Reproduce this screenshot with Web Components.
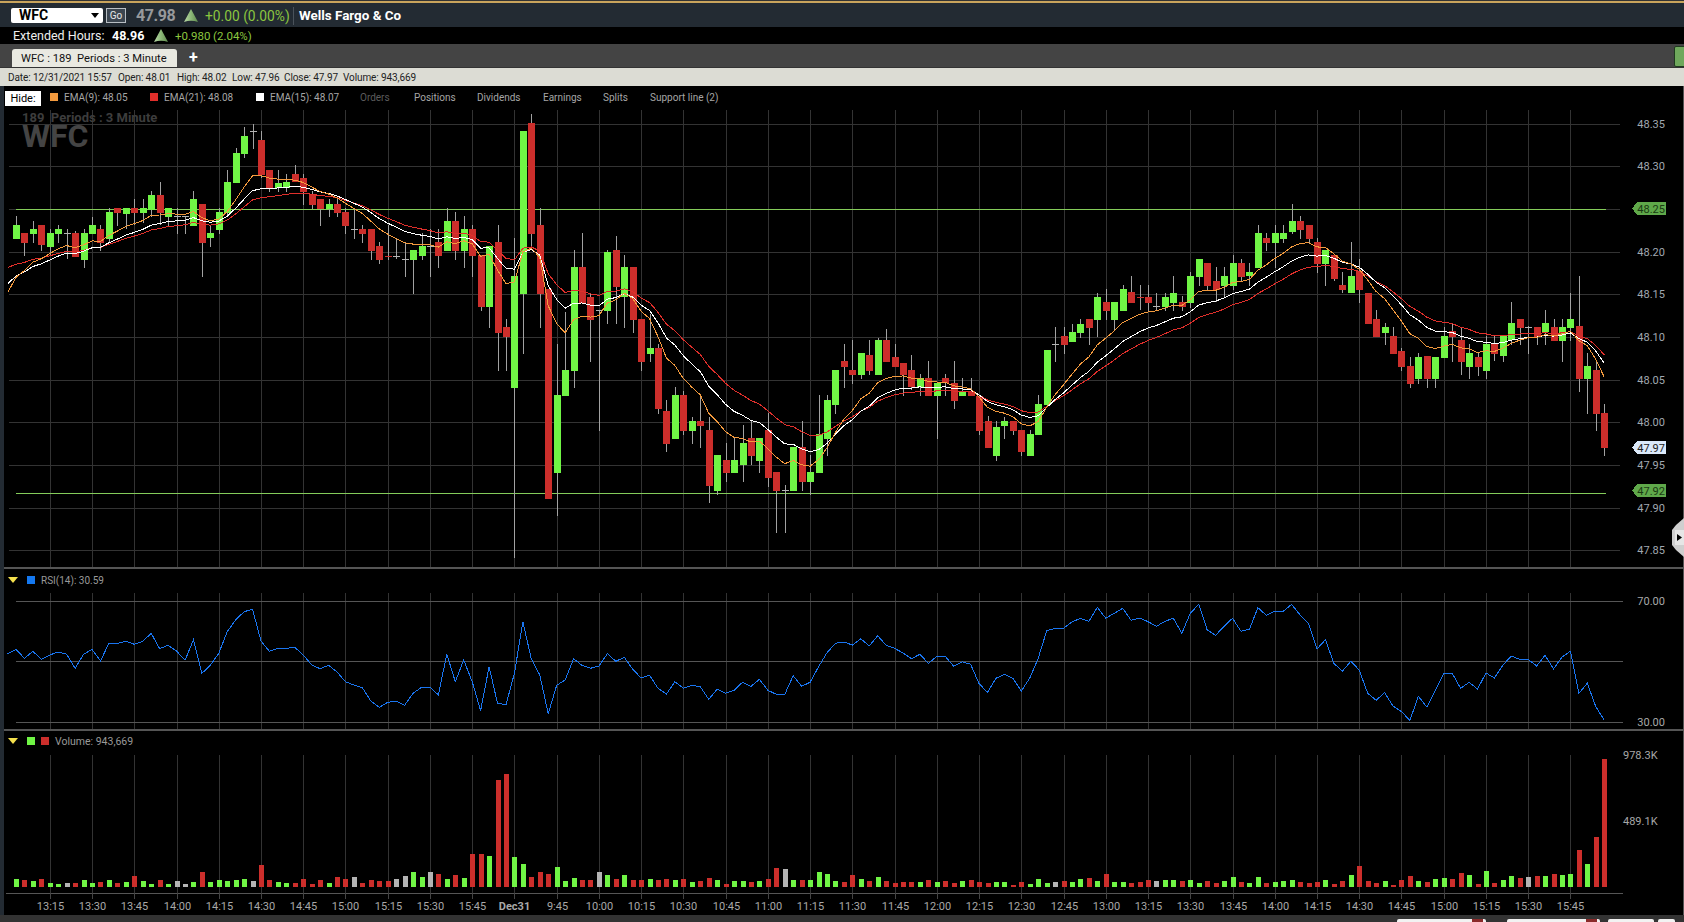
<!DOCTYPE html>
<html>
<head>
<meta charset="utf-8">
<title>WFC chart</title>
<style>
    html, body { margin: 0; padding: 0; background: #000; overflow: hidden; }
    body { font-family: Roboto, "Liberation Sans", sans-serif; }
    chart-app { width: 1684px; height: 922px; }
</style>
</head>
<body>
<chart-app></chart-app>

<script>
// Bars are read off the reference: colour, body top, body bottom, wick top, wick bottom.
// y values are offsets from y=170 at 3x, which is how they were measured.
const CANDLES = `G 165 207 138 207,R 189 219 189 258,G 177 192 153 219,R 165 225 165 243,G 189 231 177 258,
G 177 192 165 219,W 189 189 177 268,R 189 261 183 261,G 189 270 177 293,G 165 192 141 192,
R 177 219 165 243,G 126 207 114 219,R 115 129 115 168,G 114 132 114 177,R 114 129 87 165,
G 114 129 87 160,G 75 120 63 140,R 75 129 36 165,G 114 141 114 168,W 138 138 114 192,
W 138 138 138 192,G 87 168 63 168,R 102 219 102 321,G 189 204 165 231,G 126 180 114 192,
G 36 129 0 140,G -51 38 -66 38,G -102 -48 -129 -36,W -117 -117 -138 -63,R -90 15 -117 24,
R 0 53 0 66,G 39 54 0 66,G 36 54 12 66,R 12 36 -15 36,R 24 66 12 105,
R 72 105 63 118,R 87 118 87 168,G 102 118 87 140,R 102 129 87 140,R 126 168 114 192,
W 177 177 114 207,R 177 192 165 219,R 177 243 177 270,R 228 270 216 282,R 257 257 165 270,
W 257 257 204 268,W 268 268 219 321,G 240 270 240 372,G 228 258 189 270,W 228 228 177 321,
R 216 258 177 293,G 153 243 114 243,R 153 243 126 270,G 177 243 138 293,R 177 258 165 321,
R 256 411 256 423,G 228 411 228 474,R 216 489 165 603,R 471 501 447 603,G 318 654 204 1165,
G -117 372 -117 552,R -141 192 -168 240,R 165 372 114 474,R 357 987 357 987,G 675 909 522 1038,
G 600 678 426 678,G 291 603 240 654,R 291 399 189 399,R 381 450 372 576,W 421 421 421 783,
G 246 423 240 462,R 240 351 198 462,G 291 381 255 474,R 291 450 291 489,R 447 576 447 603,
G 534 552 432 576,R 534 717 522 732,R 723 822 690 846,G 675 807 651 807,R 675 783 663 795,
G 753 783 741 822,R 753 768 675 834,R 780 948 741 999,G 855 963 855 975,R 870 909 819 936,
G 870 909 801 909,G 819 885 765 936,R 804 858 750 885,G 804 873 804 909,R 780 924 729 951,
R 906 963 906 1089,W 961 961 945 1089,G 831 963 831 963,R 831 936 753 963,G 906 936 855 975,
G 792 909 675 909,G 690 807 675 858,G 600 705 600 732,R 573 591 522 654,R 600 615 510 642,
G 549 615 549 627,R 555 603 510 615,G 510 615 504 615,R 510 576 477 576,R 561 591 522 591,
R 579 615 579 678,R 600 651 555 660,G 624 651 612 678,R 624 678 573 678,G 639 678 639 807,
R 624 639 612 678,R 639 693 573 717,G 663 678 624 678,R 663 678 624 678,R 678 783 678 795,
R 753 834 738 834,G 771 858 753 873,G 753 768 741 807,R 753 783 753 795,R 780 846 780 858,
G 792 858 780 858,G 702 795 675 795,G 540 705 540 705,W 523 523 471 576,R 498 525 471 552,
G 486 516 462 516,G 462 489 447 504,R 447 474 447 525,G 381 450 369 501,R 396 423 357 450,
G 396 450 396 480,G 357 423 345 423,R 366 399 318 399,R 381 381 345 420,R 381 399 345 423,
W 408 408 369 420,G 381 411 369 423,G 369 399 318 423,R 396 411 378 423,G 318 399 306 414,
G 267 321 267 348,R 279 348 279 360,R 333 360 291 396,G 318 348 291 381,G 279 348 255 360,
R 279 321 267 333,G 306 318 279 348,G 189 294 165 294,R 204 219 189 243,G 189 219 165 294,
G 189 207 165 219,G 153 186 102 192,R 153 180 138 207,R 165 207 165 219,R 216 282 204 309,
G 240 282 240 348,R 255 327 255 333,R 345 360 306 369,G 318 369 216 369,R 303 360 267 399,
R 369 462 369 462,R 447 501 420 501,G 471 489 459 525,R 498 552 471 552,R 543 591 534 603,
R 588 642 561 654,G 561 627 549 642,R 558 627 558 654,G 561 627 561 654,G 498 564 471 564,
R 483 501 459 576,R 510 576 471 615,G 549 591 522 627,R 561 591 546 618,G 522 603 498 627,
R 522 552 498 573,G 498 558 498 576,G 459 510 396 525,R 447 474 447 525,W 472 472 468 552,
R 471 501 471 525,G 459 486 420 525,R 471 513 447 513,G 471 513 447 576,G 447 474 369 513,
R 468 627 318 666,G 588 627 549 732,R 600 732 573 783,R 729 834 702 858`
    .split(',').map(s => {
        const p = s.trim().split(' ');
        return { c: p[0], top: +p[1], bot: +p[2], hi: +p[3], lo: +p[4] };
    });

// RSI per bar, measured as offset from y=560 at 3x. First value sits one bar left of bar 0.
const RSI = [281,268,295,274,298,285,276,283,325,283,268,303,250,250,244,253,244,220,266,256,273,301,240,340,316,280,215,180,155,148,
    243,274,265,265,262,285,315,326,316,336,365,375,383,423,442,427,424,436,400,382,382,405,282,365,300,365,452,320,430,434,340,186,
    297,345,461,376,360,296,316,325,318,281,304,292,328,354,346,385,402,365,385,376,380,418,388,400,391,367,379,358,391,403,403,347,
    379,367,320,278,250,246,255,236,258,227,256,265,279,296,283,310,289,289,319,305,313,371,397,355,343,355,393,354,295,212,205,205,
    186,175,184,142,175,160,145,181,174,185,199,184,175,220,160,133,210,226,199,175,214,208,143,166,154,154,133,165,190,267,239,310,
    334,304,330,400,421,398,438,455,481,409,441,392,340,340,385,367,387,339,354,316,288,298,298,318,286,327,291,274,400,370,440,480];

// Volume bar tops, offset from y=560 at 3x, one per bar. Colour comes with it.
const VOLUME = `G957 R960 G963 R957 G969 G972 W969 R969 G960 G969 R966 G960 R969 G966 R948 G963 G972 R960 G972 W963 W972 G966 R936 G966 G960
G963 G960 G957 W963 R915 R960 G966 G969 R969 R957 R972 R960 G969 R951 R957 W951 R969 R960 R963 R963 W957 W948 G936 G951 W936
R942 G957 R945 G954 R882 R882 G888 R660 R642 G891 G912 R951 R936 R942 G921 G963 G954 R960 R960 W936 G945 R957 G945 R960 R960
G957 R960 R957 G960 R957 G966 R963 R954 G960 R972 G963 G963 R966 G963 R957 R924 W927 G960 R960 G960 G936 G942 G963 R966 R945
G957 R963 G951 R963 R969 R966 R966 G966 R960 G966 R963 R969 G963 R960 R966 R969 G966 G966 R975 R966 G972 G957 G969 W966 R963
G966 G957 R954 G963 R942 G966 G966 R969 R966 R960 W963 G960 G960 R963 G960 G969 R963 R969 G963 G951 R966 G969 G951 R969 G966
G963 G960 R966 R969 R966 G960 R972 R963 G945 R918 R963 R969 G963 R975 R960 R948 G963 R966 G957 G954 R957 R939 G945 R972 G933
R969 G960 G948 R954 W951 R948 G948 R942 G945 G942 R870 G912 R831 R597`.trim().split(/\s+/).map(s => ({ c: s[0], top: +s.slice(1) }));

const X0 = 16, DX = 8.448;
const barX = i => X0 + i * DX;
const priceY = v => 170 + v / 3;
const lowerY = v => 560 + v / 3;

const GREEN = '#70f545', RED = '#cc2e2b', GREY = '#b4b4b4', WICK = '#a2a2a2';
const fill = c => c === 'G' ? GREEN : c === 'R' ? RED : GREY;

// vertical gridlines sit every fifth bar
const GRID_BARS = [];
for (let i = 4; i < 189; i += 5) GRID_BARS.push(i);
const gridX = i => Math.round(barX(i)) + 0.5;

function timeLabels() {
    const out = [];
    let h = 13, m = 15;
    GRID_BARS.forEach(i => {
        if (i === 59) { out.push({ i, t: 'Dec31', bold: true }); h = 9; m = 45; return; }
        out.push({ i, t: `${h}:${String(m).padStart(2, '0')}` });
        m += 15;
        if (m === 60) { m = 0; h++; }
    });
    return out;
}

function ema(period, seed) {
    const k = 2 / (period + 1);
    let val = seed;
    return CANDLES.map((bar, i) => {
        const close = bar.c === 'G' ? bar.top : bar.c === 'R' ? bar.bot : bar.top;
        if (i > 0) val = close * k + val * (1 - k);
        return val;
    });
}

function upArrow(w, h) {
    return `<svg width="${w}" height="${h}" viewBox="0 0 14 14" style="display:block">
        <defs><linearGradient id="ua" x1="0" x2="1" y1="0" y2="0">
            <stop offset="0" stop-color="#b7d6a6"/><stop offset="0.5" stop-color="#8cb878"/><stop offset="1" stop-color="#5f8a4e"/>
        </linearGradient></defs>
        <path d="M7 0 L14 13 Q7 10.5 0 13 Z" fill="url(#ua)"/>
    </svg>`;
}

class ChartApp extends HTMLElement {
    constructor() {
        super();
        this.attachShadow({ mode: 'open' });
    }

    connectedCallback() {
        this.shadowRoot.innerHTML = `
            <style>
                :host { display: flex; flex-direction: column; background: #000; color: #fff; overflow: hidden; }
                .gold { height: 4px; box-sizing: border-box; background: #232b33; border-top: 1px solid #333; }
                .gold i { display: block; height: 2px; background: #c9a45c; }
                .body { flex: 1; min-height: 0; display: flex; flex-direction: column; border-left: 4px solid #232b33;
                        border-right: 1px solid #555; }
                .sep { height: 2px; background: #555; flex: none; }
            </style>
            <div class="gold"><i></i></div>
            <quote-bar></quote-bar>
            <ext-hours></ext-hours>
            <tab-strip></tab-strip>
            <info-bar></info-bar>
            <div class="body">
                <price-pane></price-pane>
                <div class="sep"></div>
                <rsi-pane></rsi-pane>
                <div class="sep"></div>
                <volume-pane></volume-pane>
                <time-axis></time-axis>
            </div>
            <status-strip></status-strip>
        `;
    }
}

class QuoteBar extends HTMLElement {
    constructor() {
        super();
        this.attachShadow({ mode: 'open' });
    }

    connectedCallback() {
        this.shadowRoot.innerHTML = `
            <style>
                :host { display: flex; align-items: center; height: 23px; flex: none; background: #232b33; padding-left: 11px;
                        box-sizing: border-box; white-space: nowrap; }
                .sym { width: 92px; height: 15px; background: #fff; border-radius: 2px; color: #000; font-weight: 700; font-size: 14px;
                       line-height: 15px; padding-left: 8px; box-sizing: border-box; position: relative; }
                .sym::after { content: ''; position: absolute; right: 4px; top: 5px; border: 4px solid transparent;
                              border-top: 5px solid #000; border-bottom: 0; }
                .go { width: 20px; height: 15px; margin-left: 3px; box-sizing: border-box; border: 1px solid #b8bec4;
                      background: #3c4650; color: #e8e8e8; font-size: 10px; line-height: 13px; text-align: center; }
                .last { margin-left: 10px; font-size: 16px; letter-spacing: -0.4px; font-weight: 700; color: #97999b; width: 48px; }
                .chg { margin-left: 7px; font-size: 13.8px; color: #8cc63f; width: 85px; }
                .name { margin-left: 3px; padding-left: 5px; height: 18px; line-height: 18px; border-left: 1px solid #4a525a;
                        font-size: 13.4px; font-weight: 700; color: #fff; }
            </style>
            <div class="sym">WFC</div>
            <div class="go">Go</div>
            <div class="last">47.98</div>
            <div class="arrow">${upArrow(14, 14)}</div>
            <div class="chg">+0.00 (0.00%)</div>
            <div class="name">Wells Fargo &amp; Co</div>
        `;
    }
}

class ExtHours extends HTMLElement {
    constructor() {
        super();
        this.attachShadow({ mode: 'open' });
    }

    connectedCallback() {
        this.shadowRoot.innerHTML = `
            <style>
                :host { display: flex; align-items: center; height: 17px; flex: none; background: #000; padding-left: 13px;
                        box-sizing: border-box; font-size: 12.5px; white-space: nowrap; color: #eee; }
                .lbl { width: 99px; }
                .val { width: 42px; font-weight: 700; color: #fff; }
                .up { color: #8cc63f; font-size: 11.5px; }
            </style>
            <span class="lbl">Extended Hours:</span>
            <span class="val">48.96</span>
            ${upArrow(14, 14)}
            <span class="up" style="margin-left:7px;width:38px">+0.980</span>
            <span class="up">(2.04%)</span>
        `;
    }
}

class TabStrip extends HTMLElement {
    constructor() {
        super();
        this.attachShadow({ mode: 'open' });
    }

    connectedCallback() {
        this.shadowRoot.innerHTML = `
            <style>
                :host { display: flex; align-items: flex-end; height: 24px; flex: none; background: #444; box-sizing: border-box;
                        padding-left: 12px; border-bottom: 1px solid #333; position: relative; }
                .tab { width: 165px; height: 18px; background: #e9e9e1; border-radius: 3px 3px 0 0; box-sizing: border-box;
                       color: #111; font-size: 11.2px; line-height: 20px; padding-left: 9px; white-space: pre; overflow: hidden; }
                .plus { margin: 4px 0 0 12px; align-self: center; font-size: 16px; font-weight: 700; color: #fff; line-height: 16px; }
                .green { position: absolute; right: -2px; top: 2px; width: 10px; height: 19px; background: #6fa85c;
                         border: 1px solid #1f3a1f; border-radius: 2px; }
            </style>
            <div class="tab">WFC : 189  Periods : 3 Minute</div>
            <div class="plus">+</div>
            <div class="green"></div>
        `;
    }
}

class InfoBar extends HTMLElement {
    constructor() {
        super();
        this.attachShadow({ mode: 'open' });
    }

    connectedCallback() {
        const items = [['Date: 12/31/2021 15:57', 110], ['Open: 48.01', 59], ['High: 48.02', 55], ['Low: 47.96', 52], ['Close: 47.97', 59], ['Volume: 943,669', 80]];
        this.shadowRoot.innerHTML = `
            <style>
                :host { display: flex; align-items: center; height: 18px; flex: none; background: #dcdcd4; color: #222;
                        font-size: 10px; letter-spacing: -0.1px; padding-left: 8px; box-sizing: border-box; white-space: nowrap; }
                span { flex: none; }
            </style>
            ${items.map(([t, w]) => `<span style="width:${w}px">${t}</span>`).join('')}
        `;
    }
}

// a coloured square with its text, used in the legends
class LegendItem extends HTMLElement {
    constructor() {
        super();
        this.attachShadow({ mode: 'open' });
    }

    connectedCallback() {
        const color = this.getAttribute('color');
        this.shadowRoot.innerHTML = `
            <style>
                :host { display: inline-flex; align-items: center; gap: 6px; white-space: nowrap; color: inherit; flex: none; }
                i { display: block; width: 8px; height: 8px; background: ${color}; }
            </style>
            <i></i><slot></slot>
        `;
    }
}

class PricePane extends HTMLElement {
    constructor() {
        super();
        this.attachShadow({ mode: 'open' });
    }

    connectedCallback() {
        this.shadowRoot.innerHTML = `
            <style>
                :host { display: block; height: 481px; flex: none; position: relative; }
                .legend { height: 22px; display: flex; align-items: center; color: #a6a6a6; font-size: 10px; box-sizing: border-box; padding-left: 1px; }
                .legend span { flex: none; }
                .hide { flex: none; width: 36px; height: 15px; background: #fff; color: #000; font-size: 11px; line-height: 15px; text-align: center; margin: 2px 9px 0 0; }
                .dim { color: #5c5c5c; }
                svg { display: block; }
                text { font-family: Roboto, "Liberation Sans", sans-serif; font-size: 11px; }
                .mark { position: absolute; left: 18px; top: 26px; color: #3d3d3d; font-weight: 700; white-space: pre; pointer-events: none; }
                .mark div:first-child { font-size: 13px; line-height: 12px; height: 12px; }
                .mark div:last-child { font-size: 32px; line-height: 25px; height: 25px; color: #444; }
                .handle { position: absolute; right: -1px; top: 432px; width: 12px; height: 39px; }
            </style>
            <div class="legend">
                <div class="hide">Hide:</div>
                <legend-item color="#f39a3e" style="width:100px">EMA(9): 48.05</legend-item>
                <legend-item color="#e02f2b" style="width:106px">EMA(21): 48.08</legend-item>
                <legend-item color="#ffffff" style="width:104px">EMA(15): 48.07</legend-item>
                <span class="dim" style="width:54px">Orders</span>
                <span style="width:63px">Positions</span>
                <span style="width:66px">Dividends</span>
                <span style="width:60px">Earnings</span>
                <span style="width:47px">Splits</span>
                <span>Support line (2)</span>
            </div>
            <div class="mark"><div>189  Periods : 3 Minute</div><div>WFC</div></div>
            ${this.chart()}
            <svg class="handle" viewBox="0 0 12 39">
                <path d="M12 0 L4 7 L0 12 L0 27 L4 32 L12 39 Z" fill="#cfcfcf"/>
                <rect x="3" y="12" width="9" height="15" fill="#e6e6e6"/>
                <path d="M5 16 L10 19.5 L5 23 Z" fill="#000"/>
            </svg>
        `;
    }

    chart() {
        let s = '';
        for (let y = 123.5; y < 560; y += 42.68) {
            const yy = Math.round(y) + 0.5;
            s += `<line x1="9" x2="1620" y1="${yy}" y2="${yy}" stroke="#333"/>`;
        }
        GRID_BARS.forEach(i => {
            s += `<line x1="${gridX(i)}" x2="${gridX(i)}" y1="110" y2="567" stroke="#333"/>`;
        });

        // support lines
        s += `<line x1="16" x2="1606" y1="209.5" y2="209.5" stroke="#84cc5a"/>`;
        s += `<line x1="16" x2="1606" y1="493.5" y2="493.5" stroke="#84cc5a"/>`;

        CANDLES.forEach((b, i) => {
            const x = barX(i);
            const cx = Math.round(x) + 0.5;
            s += `<rect x="${cx - 0.5}" y="${priceY(b.hi)}" width="1" height="${(b.lo - b.hi) / 3}" fill="${WICK}"/>`;
            if (b.top === b.bot) {
                const col = b.c === 'R' ? RED : GREY;
                s += `<rect x="${cx - 3.5}" y="${Math.round(priceY(b.top))}" width="7" height="1" fill="${col}"/>`;
            } else {
                s += `<rect x="${cx - 3.5}" y="${priceY(b.top)}" width="7" height="${(b.bot - b.top) / 3}" fill="${fill(b.c)}"/>`;
            }
        });

        [[ema(21, 283), 292, '#e02f2b'], [ema(15, 318), 340, '#ffffff'], [ema(9, 322), 366, '#f39a3e']].forEach(([vals, start, col]) => {
            const pts = [`8,${priceY(start)}`].concat(vals.map((v, i) => `${barX(i).toFixed(1)},${priceY(v).toFixed(1)}`));
            s += `<polyline points="${pts.join(' ')}" fill="none" stroke="${col}" stroke-width="1"/>`;
        });

        const labels = ['48.35', '48.30', '48.25', '48.20', '48.15', '48.10', '48.05', '48.00', '47.95', '47.90', '47.85'];
        labels.forEach((t, n) => {
            if (t === '48.25') return;
            s += `<text x="1665" y="${123.5 + n * 42.68 + 4}" text-anchor="end" fill="#a0a8b0">${t}</text>`;
        });

        [[202, '48.25', '#5fa84a', '#1a3a12'], [441, '47.97', '#dbe9fa', '#222'], [484, '47.92', '#5fa84a', '#1a3a12']].forEach(([y, t, bg, fg]) => {
            s += `<path d="M1632 ${y + 6.5} L1637 ${y} H1666 V${y + 13} H1637 Z" fill="${bg}"/>`;
            s += `<text x="1665" y="${y + 10.5}" text-anchor="end" fill="${fg}">${t}</text>`;
        });

        return `<svg width="1679" height="459" viewBox="4 108 1679 459" shape-rendering="crispEdges">${s}</svg>`;
    }
}

class RsiPane extends HTMLElement {
    constructor() {
        super();
        this.attachShadow({ mode: 'open' });
    }

    connectedCallback() {
        let s = '';
        GRID_BARS.forEach(i => {
            s += `<line x1="${gridX(i)}" x2="${gridX(i)}" y1="593" y2="729" stroke="#333"/>`;
        });
        [601.5, 661.5, 722.5].forEach(y => {
            s += `<line x1="16" x2="1623" y1="${y}" y2="${y}" stroke="#555"/>`;
        });
        const pts = RSI.map((v, n) => `${barX(n - 1).toFixed(1)},${lowerY(v).toFixed(1)}`).join(' ');
        s += `<polyline points="${pts}" fill="none" stroke="#1a75f0"/>`;
        s += `<text x="1665" y="605" text-anchor="end" fill="#a8a8a8">70.00</text>`;
        s += `<text x="1665" y="726" text-anchor="end" fill="#a8a8a8">30.00</text>`;

        this.shadowRoot.innerHTML = `
            <style>
                :host { display: block; height: 160px; flex: none; }
                .legend { height: 24px; display: flex; align-items: center; gap: 9px; padding: 0 0 2px 4px; box-sizing: border-box;
                          color: #999; font-size: 10px; }
                svg { display: block; }
                text { font-family: Roboto, "Liberation Sans", sans-serif; font-size: 11px; }
                .tri { width: 0; height: 0; border: 5px solid transparent; border-top: 6px solid #f4e04d; border-bottom: 0; }
            </style>
            <div class="legend"><div class="tri"></div><legend-item color="#1478f0">RSI(14): 30.59</legend-item></div>
            <svg width="1679" height="136" viewBox="4 593 1679 136" shape-rendering="crispEdges">${s}</svg>
        `;
    }
}

class VolumePane extends HTMLElement {
    constructor() {
        super();
        this.attachShadow({ mode: 'open' });
    }

    connectedCallback() {
        let s = '';
        GRID_BARS.forEach(i => {
            s += `<line x1="${gridX(i)}" x2="${gridX(i)}" y1="755" y2="893" stroke="#333"/>`;
        });
        VOLUME.forEach((b, i) => {
            const cx = Math.round(barX(i)) + 0.5;
            const y = lowerY(b.top);
            s += `<rect x="${cx - 2.5}" y="${y}" width="5" height="${887 - y}" fill="${fill(b.c)}"/>`;
        });
        s += `<text x="1623" y="759" fill="#a8a8a8">978.3K</text>`;
        s += `<text x="1623" y="825" fill="#a8a8a8">489.1K</text>`;

        this.shadowRoot.innerHTML = `
            <style>
                :host { display: block; height: 162px; flex: none; }
                .legend { height: 16px; display: flex; align-items: center; padding: 4px 0 0 4px; box-sizing: border-box;
                          color: #999; font-size: 10.5px; }
                svg { display: block; }
                text { font-family: Roboto, "Liberation Sans", sans-serif; font-size: 11px; }
                .tri { width: 0; height: 0; border: 5px solid transparent; border-top: 6px solid #f4e04d; border-bottom: 0; margin-right: 9px; }
                i { display: block; width: 8px; height: 8px; background: #70f545; margin-right: 6px; }
            </style>
            <div class="legend"><div class="tri"></div><i></i><legend-item color="#cc2e2b">Volume: 943,669</legend-item></div>
            <svg width="1679" height="146" viewBox="4 747 1679 146" shape-rendering="crispEdges">${s}</svg>
        `;
    }
}

class TimeAxis extends HTMLElement {
    constructor() {
        super();
        this.attachShadow({ mode: 'open' });
    }

    connectedCallback() {
        let s = `<line x1="6" x2="1623" y1="893.5" y2="893.5" stroke="#555"/>`;
        timeLabels().forEach(l => {
            s += `<line x1="${gridX(l.i)}" x2="${gridX(l.i)}" y1="893" y2="899" stroke="#444"/>`;
            s += `<text x="${gridX(l.i)}" y="910" text-anchor="middle" fill="#a8a8a8"${l.bold ? ' font-weight="700"' : ''}>${l.t}</text>`;
        });
        this.shadowRoot.innerHTML = `
            <style>
                :host { display: block; height: 22px; flex: none; }
                svg { display: block; }
                text { font-family: Roboto, "Liberation Sans", sans-serif; font-size: 11px; }
            </style>
            <svg width="1679" height="22" viewBox="4 893 1679 22" shape-rendering="crispEdges">${s}</svg>
        `;
    }
}

class StatusStrip extends HTMLElement {
    constructor() {
        super();
        this.attachShadow({ mode: 'open' });
    }

    connectedCallback() {
        this.shadowRoot.innerHTML = `
            <style>
                :host { display: flex; height: 7px; flex: none; background: #333; padding-top: 4px; padding-left: 1397px;
                        box-sizing: border-box; overflow: hidden; }
                div { height: 6px; background: #f2f2f2; border-radius: 2px 2px 0 0; flex: none; display: flex; justify-content: flex-end; padding-right: 3px; box-sizing: border-box; }
                b { display: block; width: 11px; height: 6px; background: #8a2a2a; }
            </style>
            <div style="width:89px"><b></b></div>
            <div style="width:93px;margin-left:21px"><b></b></div>
            <div style="width:46px;margin-left:8px"></div>
            <div style="width:17px;margin-left:4px"></div>
        `;
    }
}

customElements.define('legend-item', LegendItem);
customElements.define('quote-bar', QuoteBar);
customElements.define('ext-hours', ExtHours);
customElements.define('tab-strip', TabStrip);
customElements.define('info-bar', InfoBar);
customElements.define('price-pane', PricePane);
customElements.define('rsi-pane', RsiPane);
customElements.define('volume-pane', VolumePane);
customElements.define('time-axis', TimeAxis);
customElements.define('status-strip', StatusStrip);
customElements.define('chart-app', ChartApp);
</script>
</body>
</html>
